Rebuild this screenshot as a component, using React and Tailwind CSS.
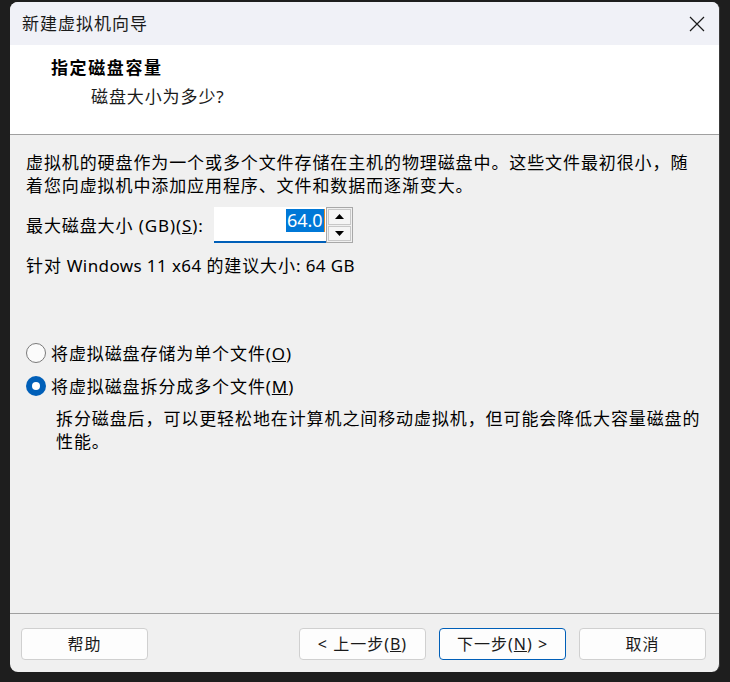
import React from "react";

const font = { fontFamily: '"Noto Sans", "Noto Sans CJK SC", sans-serif' };

// Push button used in the footer row
const WizardButton = ({ children, primary }) => (
    <button
        className={`w-[127px] h-[32px] rounded-[4px] bg-[#fdfdfd] text-[16px] text-[#1a1a1a] tracking-[1px] flex items-center justify-center border ${
            primary ? "border-[#005fb8]" : "border-[#d0d0d0]"
        }`}
    >
        {children}
    </button>
);

// Radio option with label
const Radio = ({ checked, children }) => (
    <div className="flex items-center h-[24px]">
        {checked ? (
            <span className="w-[20px] h-[20px] rounded-full bg-[#005fb8] flex items-center justify-center">
                <span className="w-[8px] h-[8px] rounded-full bg-white" />
            </span>
        ) : (
            <span className="w-[20px] h-[20px] rounded-full border border-[#7a7a7a] bg-[#fbfbfb]" />
        )}
        <span className="ml-[5px]">{children}</span>
    </div>
);

export default function App() {
    return (
        <div className="w-[730px] h-[682px] bg-[#1e1e1e] pt-[2px] pl-[10px]" style={font}>
            <div className="w-[710px] h-[670px] rounded-[8px] bg-[#f0f0f0] overflow-hidden flex flex-col border-r border-[#3a3a3a]">
                {/* Title bar */}
                <div className="h-[43px] bg-[#f0f1f7] flex items-center justify-between pl-[12px] pr-[14px] shrink-0">
                    <span className="text-[17px] tracking-[1px] text-[#1a1a1a]">新建虚拟机向导</span>
                    <svg width="16" height="16" viewBox="0 0 16 16">
                        <path d="M1 1 L15 15 M15 1 L1 15" stroke="#1a1a1a" strokeWidth="1.2" fill="none" />
                    </svg>
                </div>

                {/* Header */}
                <div className="h-[90px] bg-white border-b border-[#a0a0a0] pl-[41px] pt-[11px] shrink-0">
                    <div className="text-[17px] font-bold tracking-[1.6px] leading-[24px] text-black">指定磁盘容量</div>
                    <div className="pl-[40px] mt-[5px] text-[17px] tracking-[0.9px] leading-[24px] text-[#1a1a1a]">
                        磁盘大小为多少?
                    </div>
                </div>

                {/* Body */}
                <div className="flex-1 px-[16px] pt-[16px] text-[17px] tracking-[0.9px] leading-[23px] text-black">
                    <p>
                        虚拟机的硬盘作为一个或多个文件存储在主机的物理磁盘中。这些文件最初很小，随着您向虚拟机中添加应用程序、文件和数据而逐渐变大。
                    </p>

                    <div className="flex items-center mt-[10px] h-[36px]">
                        <span>
                            最大磁盘大小 (GB)(<span className="underline">S</span>):
                        </span>
                        <div className="ml-[10px] w-[112px] h-[36px] bg-white border-b-2 border-[#005fb8] flex items-start justify-end pt-[2px] pr-[1px]">
                            <span className="bg-[#0078d7] text-white text-[18px] leading-[23px] tracking-normal px-[1px] border-r border-[#e08a2c]">
                                64.0
                            </span>
                        </div>
                        <div className="w-[27px] h-[36px] border border-[#a8a8a8] bg-[#f0f0f0] flex flex-col p-[1px] gap-[1px]">
                            <div className="flex-1 border border-[#c8c8c8] bg-[#f5f5f5] flex items-center justify-center">
                                <svg width="9" height="5" viewBox="0 0 9 5">
                                    <path d="M0 5 L4.5 0 L9 5 Z" fill="#000" />
                                </svg>
                            </div>
                            <div className="flex-1 border border-[#c8c8c8] bg-[#f5f5f5] flex items-center justify-center">
                                <svg width="9" height="5" viewBox="0 0 9 5">
                                    <path d="M0 0 L4.5 5 L9 0 Z" fill="#000" />
                                </svg>
                            </div>
                        </div>
                    </div>

                    <p className="mt-[11px]">
                        针对<span className="tracking-[0.4px]"> Windows 11 x64 </span>的建议大小<span className="tracking-[0.4px]">: 64 GB</span>
                    </p>

                    <div className="mt-[64px] flex flex-col gap-[9px]">
                        <Radio>
                            将虚拟磁盘存储为单个文件(<span className="underline">O</span>)
                        </Radio>
                        <Radio checked>
                            将虚拟磁盘拆分成多个文件(<span className="underline">M</span>)
                        </Radio>
                    </div>

                    <p className="mt-[9px] pl-[30px]">
                        拆分磁盘后，可以更轻松地在计算机之间移动虚拟机，但可能会降低大容量磁盘的性能。
                    </p>
                </div>

                {/* Footer */}
                <div className="h-[59px] border-t border-[#a0a0a0] flex items-start pt-[14px] pl-[11px] pr-[13px] shrink-0">
                    <WizardButton>帮助</WizardButton>
                    <div className="flex-1" />
                    <div className="flex gap-[13px]">
                        <WizardButton>
                            &lt; 上一步(<span className="underline">B</span>)
                        </WizardButton>
                        <WizardButton primary>
                            下一步(<span className="underline">N</span>) &gt;
                        </WizardButton>
                        <WizardButton>取消</WizardButton>
                    </div>
                </div>
            </div>
        </div>
    );
}
